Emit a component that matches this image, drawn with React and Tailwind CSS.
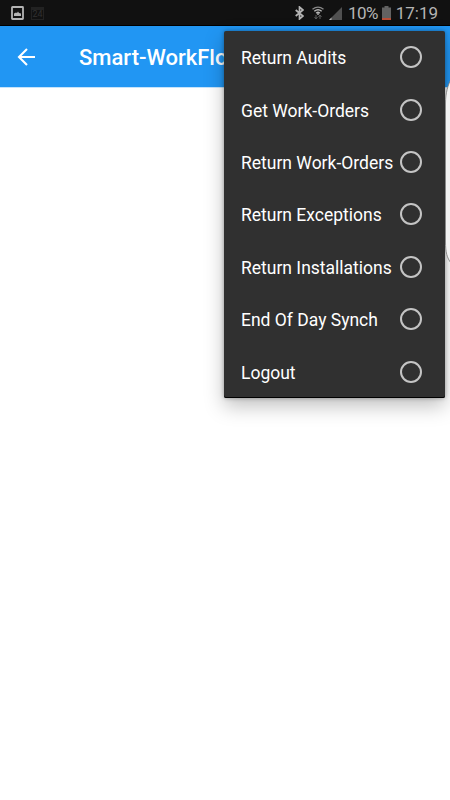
import React, { useState } from 'react';

const menuItems = [
  'Return Audits',
  'Get Work-Orders',
  'Return Work-Orders',
  'Return Exceptions',
  'Return Installations',
  'End Of Day Synch',
  'Logout'
];

export default function App() {
  const [selected, setSelected] = useState(null);

  return (
    <div className="relative h-[800px] w-[450px] overflow-hidden bg-white font-['Roboto',sans-serif]">
      <StatusBar />

      {/* Toolbar */}
      <header className="flex h-[61px] items-center bg-[#2196f3] pl-[17px] text-white shadow-[0_1px_0_#c5e3fb]">
        <button aria-label="Back" className="h-[18px] w-[18px]">
          <svg viewBox="0 0 18 18" className="block h-[18px] w-[18px]" fill="none" stroke="currentColor" strokeWidth="2.1">
            <path d="M18 9H2M10 1L2 9l8 8" />
          </svg>
        </button>
        <h1 className="ml-[44px] whitespace-nowrap pt-[3px] text-[22px] leading-7 font-medium">Smart-WorkFlow</h1>
      </header>

      {/* Overflow menu */}
      <ul className="absolute top-[31px] left-[224px] w-[221px] rounded-[2px] bg-[#303030] shadow-[0_8px_20px_rgba(0,0,0,0.25),inset_0_-1px_0_#000,0_0_4px_rgba(0,0,0,0.35)]">
        {menuItems.map((item) => (
          <li key={item}>
            <button
              onClick={() => setSelected(item)}
              className="flex h-[52.4px] w-full items-center justify-between pr-[23px] pl-[17px] text-left"
            >
              <span className="whitespace-nowrap pt-0.5 text-[17.5px] leading-6 text-white">{item}</span>
              <span className="flex h-[22px] w-[22px] shrink-0 items-center justify-center rounded-full border-2 border-[#c4c4c4]">
                {selected === item && <span className="h-2.5 w-2.5 rounded-full bg-[#c4c4c4]" />}
              </span>
            </button>
          </li>
        ))}
      </ul>

      {/* Edge panel handle */}
      <svg className="absolute top-[76px] left-[445px] h-[190px] w-[5px]" viewBox="0 0 5 190">
        <path d="M6 3C3 9 .5 17 .5 27V166C.5 176 2 182 6 187Z" fill="#f2f2f2" stroke="#777" strokeWidth="0.8" />
      </svg>
    </div>
  );
}

function StatusBar() {
  return (
    <div className="flex h-[26px] items-center border-b border-black bg-[#111111] pt-px pr-3 pl-[11px] text-[#b4b4b4]">
      {/* Picture notification */}
      <svg className="h-[14px] w-[13px]" viewBox="0 0 13 14">
        <rect x="1" y="1" width="11" height="12" rx="0.5" fill="none" stroke="currentColor" strokeWidth="1.8" />
        <path d="M3 10V7.500l2-1 1 .5L7 5.500l1 1.500 2 .5V10z" fill="currentColor" />
      </svg>

      {/* Calendar notification, dimmed */}
      <div className="ml-[7px] flex h-[13px] w-[13px] items-end justify-center border border-t-[3px] border-[#222222] text-[9px] leading-[9px] text-[#303030]">
        24
      </div>

      <svg className="ml-[251px] h-[14px] w-[9px]" viewBox="0 0 9 14" fill="none" stroke="currentColor" strokeWidth="1.7">
        <path d="M.7 4L8 10 4.500 13V1L8 4 .7 10" />
      </svg>

      {/* Wifi with data arrows */}
      <svg className="ml-[8px] h-[14px] w-[12px]" viewBox="0 0 12 14" fill="none">
        <path d="M.5 3.300Q6-1.200 11.500 3.300" stroke="#888" strokeWidth="1.3" />
        <path d="M2.300 5.300Q6 2 9.700 5.300M4.200 7.200Q6 5.500 7.800 7.200" stroke="currentColor" strokeWidth="1.4" />
        <path d="M6 7v2" stroke="currentColor" strokeWidth="1.4" />
        <path d="M4 9v4M2.500 11L4 13l1.500-2M8 13V9M6.500 11L8 9l1.500 2" stroke="#5c5c5c" strokeWidth="1" />
      </svg>

      {/* Signal */}
      <svg className="ml-[5px] h-[13px] w-[13px]" viewBox="0 0 13 13">
        <path d="M0 13L13 0v13z" fill="#505050" />
        <path d="M0 13l2.500-2.500V13z" fill="#b4b4b4" />
      </svg>

      <span className="ml-[6px] w-[31px] text-[17px] leading-5 tracking-[-0.5px]">10%</span>

      {/* Battery */}
      <svg className="ml-[3px] h-[14px] w-[9px]" viewBox="0 0 9 14">
        <path d="M2.500 0h4v1.500H9V14H0V1.500h2.500z" fill="#626262" />
        <path d="M0 12h9v2H0z" fill="#b94f38" />
      </svg>

      <span className="ml-auto text-[17px] leading-5">17:19</span>
    </div>
  );
}
